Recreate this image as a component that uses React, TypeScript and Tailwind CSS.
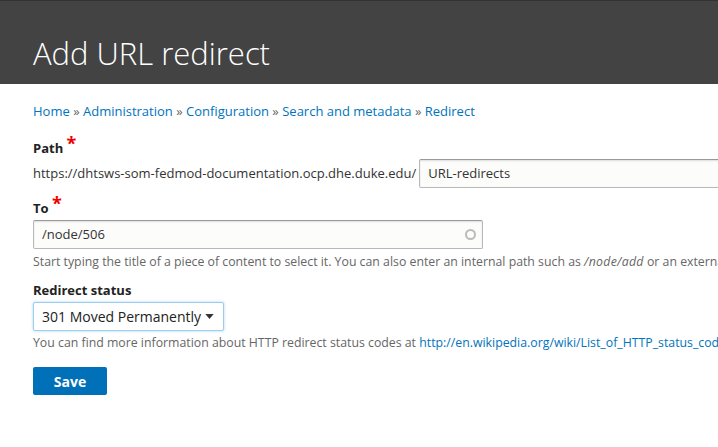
import React from 'react'

const Req = () => (
  <span className="inline-block align-top h-[14px] leading-[18px] text-[18px] text-[#e00] -mt-[4px]">*</span>
)

const Label = ({ children }: { children: React.ReactNode }) => (
  <div className="h-[20px] text-[13px] leading-[20px] font-bold text-[#222] whitespace-nowrap">
    {children} <Req />
  </div>
)

const inputCls =
  'h-[29px] border border-[#b8b8b8] border-t-[#999] bg-[#fcfcfa] rounded-[2px] shadow-[inset_0_1px_2px_rgba(0,0,0,0.125)] text-[13px] text-[#333] flex items-center px-[8px]'

const App = () => {
  return (
    <div className="w-full h-[447px] overflow-hidden bg-white font-['Open_Sans',sans-serif] text-[#333]">
      <header className="h-[84px] bg-[#434343] border-t border-[#333] pl-[33px] pt-[32px]">
        <h1 className="text-[31px] leading-[40px] font-light text-white whitespace-nowrap">Add URL redirect</h1>
      </header>

      <main className="px-[33px]">
        <nav className="mt-[17px] text-[13px] leading-[20px] text-[#0074bd] whitespace-nowrap">
          <a>Home</a> <span className="text-[#666]">»</span> <a>Administration</a> <span className="text-[#666]">»</span>{' '}
          <a>Configuration</a> <span className="text-[#666]">»</span> <a>Search and metadata</a>{' '}
          <span className="text-[#666]">»</span> <a>Redirect</a>
        </nav>

        <div className="mt-[17px]">
          <Label>Path</Label>
          <div className="mt-[1px] flex items-center whitespace-nowrap">
            <span className="text-[13px] text-[#333] mr-[3px]">https://dhtsws-som-fedmod-documentation.ocp.dhe.duke.edu/</span>
            <div className={`${inputCls} w-[400px] shrink-0`}>URL-redirects</div>
          </div>
        </div>

        <div className="mt-[10px]">
          <Label>To</Label>
          <div className={`${inputCls} mt-[2px] w-[450px] justify-between pr-[6px]`}>
            <span>/node/506</span>
            <span className="w-[11px] h-[11px] rounded-full border-2 border-[#bbb]" />
          </div>
          <p className="mt-[4px] h-[18px] text-[12.3px] leading-[18px] text-[#666] whitespace-nowrap">
            Start typing the title of a piece of content to select it. You can also enter an internal path such as{' '}
            <em className="tracking-[0.3px]">/node/add</em> or an external URL such as http://example.com.
          </p>
        </div>

        <div className="mt-[9px]">
          <div className="h-[20px] text-[13px] leading-[20px] font-bold text-[#222]">Redirect status</div>
          <div className="mt-[2px] w-[191px] h-[29px] border border-[#9ccdef] rounded-[2px] shadow-[0_0_3px_rgba(64,160,230,0.45)] bg-white flex items-center justify-between pl-[8px] pr-[9px]">
            <span className="text-[14px] text-[#222] whitespace-nowrap">301 Moved Permanently</span>
            <svg width="9" height="5" viewBox="0 0 10 6">
              <path d="M0 0h10L5 6z" fill="#333" />
            </svg>
          </div>
          <p className="mt-[3px] h-[18px] text-[12.3px] leading-[18px] text-[#666] whitespace-nowrap">
            You can find more information about HTTP redirect status codes at{' '}
            <a className="text-[#0074bd]">http://en.wikipedia.org/wiki/List_of_HTTP_status_codes#3xx_Redirection</a>.
          </p>
        </div>

        <button className="mt-[15px] w-[74px] h-[28px] bg-[#0071b8] text-white text-[14px] font-bold rounded-[2px]">
          Save
        </button>
      </main>
    </div>
  )
}

export default App
